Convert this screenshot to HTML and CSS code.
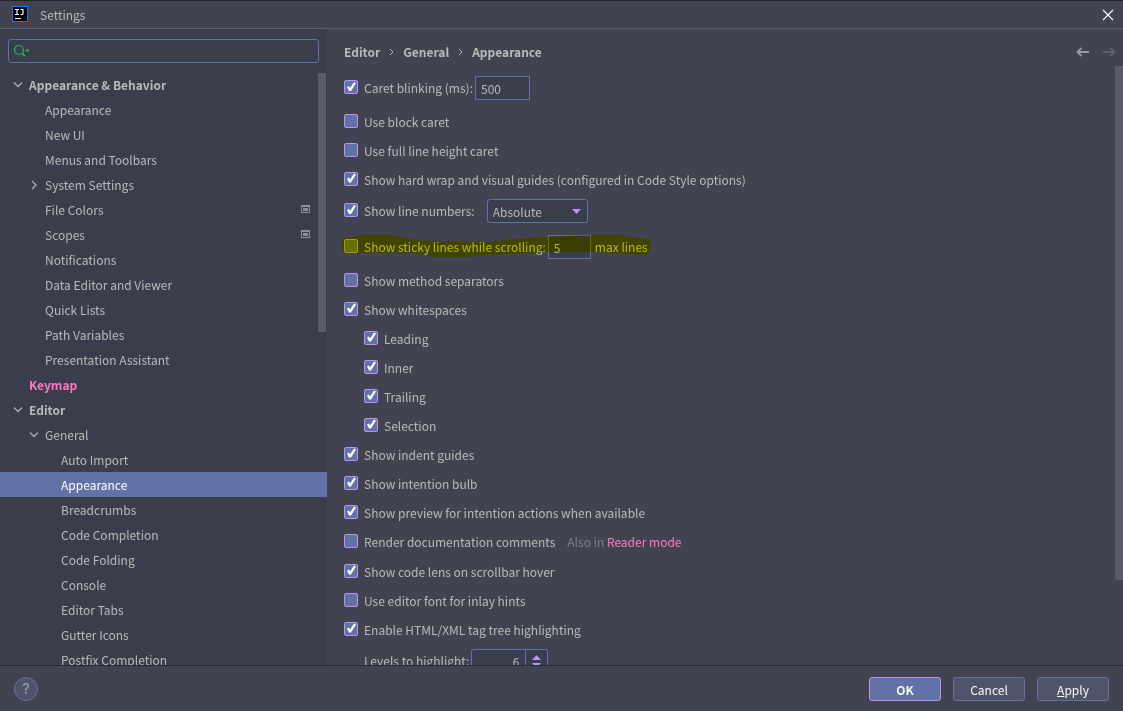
FILE: index.html
```html
<!DOCTYPE html>
<html lang="en">
<head>
<meta charset="utf-8">
<title>Settings</title>
<link rel="stylesheet" href="styles.css">
</head>
<body>
<header class="titlebar">
  <svg class="logo" width="16" height="16" viewBox="0 0 16 16" aria-hidden="true"><rect width="16" height="16" fill="#087cfa"/><rect x="1" y="1" width="14" height="14" fill="#000"/><path d="M3 3.500h4M5 3.500v5M3 8.500h4M8.500 3.500h3M11 3v4.500q0 1-1 1H8.500M3 12.500h6" fill="none" stroke="#fff" stroke-width="1.200"/></svg>
  <h1 class="title">Settings</h1>
  <button class="icon-button" aria-label="Close"><svg width="12" height="12" viewBox="0 0 12 12"><path d="M1 1l10 10M11 1L1 11" stroke="#fff" stroke-width="1.100"/></svg></button>
</header>
<div class="body">
  <aside class="sidebar">
    <div class="search">
      <svg width="18" height="14" viewBox="0 0 18 14" aria-hidden="true"><circle cx="5" cy="6" r="4.500" fill="none" stroke="#2fb164" stroke-width="1.200"/><path d="M8 9l3 3.200" stroke="#2fb164" stroke-width="1.800"/><path d="M11 5.500h5L13.500 8z" fill="#2fb164"/></svg>
      <input class="search-input" type="text" aria-label="Search settings">
    </div>
    <div class="tree-area">
      <nav class="tree" aria-label="Settings categories">
        <a class="node root" href="#"><svg class="arrow" viewBox="0 0 10 10"><path d="M1 2.500l4 4 4-4"/></svg>Appearance &amp; Behavior</a>
        <a class="node l1" href="#">Appearance</a>
        <a class="node l1" href="#">New UI</a>
        <a class="node l1" href="#">Menus and Toolbars</a>
        <a class="node l1 open" href="#"><svg class="arrow" viewBox="0 0 10 10"><path d="M3 1l4 4-4 4"/></svg>System Settings</a>
        <a class="node l1" href="#">File Colors<svg class="badge" width="9" height="8" viewBox="0 0 9 8"><path d="M0 0h9v8H0zM1 2v5h7V2z" fill="#8c8f99" fill-rule="evenodd"/><path d="M2 3h5v3H2z" fill="#8c8f99"/></svg></a>
        <a class="node l1" href="#">Scopes<svg class="badge" width="9" height="8" viewBox="0 0 9 8"><path d="M0 0h9v8H0zM1 2v5h7V2z" fill="#8c8f99" fill-rule="evenodd"/><path d="M2 3h5v3H2z" fill="#8c8f99"/></svg></a>
        <a class="node l1" href="#">Notifications</a>
        <a class="node l1" href="#">Data Editor and Viewer</a>
        <a class="node l1" href="#">Quick Lists</a>
        <a class="node l1" href="#">Path Variables</a>
        <a class="node l1" href="#">Presentation Assistant</a>
        <a class="node keymap" href="#">Keymap</a>
        <a class="node root" href="#"><svg class="arrow" viewBox="0 0 10 10"><path d="M1 2.500l4 4 4-4"/></svg>Editor</a>
        <a class="node l1 open" href="#"><svg class="arrow" viewBox="0 0 10 10"><path d="M1 2.500l4 4 4-4"/></svg>General</a>
        <a class="node l2" href="#">Auto Import</a>
        <a class="node l2 selected" href="#" aria-current="page">Appearance</a>
        <a class="node l2" href="#">Breadcrumbs</a>
        <a class="node l2" href="#">Code Completion</a>
        <a class="node l2" href="#">Code Folding</a>
        <a class="node l2" href="#">Console</a>
        <a class="node l2" href="#">Editor Tabs</a>
        <a class="node l2" href="#">Gutter Icons</a>
        <a class="node l2" href="#">Postfix Completion</a>
      </nav>
      <div class="thumb"></div>
    </div>
  </aside>
  <main class="main">
    <div class="crumbs">
      <h2 class="crumb-list"><span>Editor</span><svg width="5" height="8" viewBox="0 0 5 8"><path d="M1 1l3 3-3 3"/></svg><span>General</span><svg width="5" height="8" viewBox="0 0 5 8"><path d="M1 1l3 3-3 3"/></svg><span>Appearance</span></h2>
      <button class="icon-button" aria-label="Back"><svg width="13" height="10" viewBox="0 0 13 10"><path d="M5.500 1L1.500 5l4 4M1.500 5H13" fill="none" stroke="#9698a2" stroke-width="1.800"/></svg></button>
      <button class="icon-button" aria-label="Forward" disabled><svg width="13" height="10" viewBox="0 0 13 10"><path d="M7.500 1l4 4-4 4M11.500 5H0" fill="none" stroke="#5f6068" stroke-width="1.800"/></svg></button>
    </div>
    <div class="content">
      <form class="options">
        <div class="row caret-row"><label class="check"><input type="checkbox" checked>Caret blinking (ms):</label><input class="field" type="text" value="500" aria-label="Caret blinking period"></div>
        <div class="row"><label class="check"><input type="checkbox">Use block caret</label></div>
        <div class="row"><label class="check"><input type="checkbox">Use full line height caret</label></div>
        <div class="row"><label class="check"><input type="checkbox" checked>Show hard wrap and visual guides (configured in Code Style options)</label></div>
        <div class="row numbers-row"><label class="check"><input type="checkbox" checked>Show line numbers:</label><span class="select-box"><select class="select" aria-label="Line numbers"><option>Absolute</option><option>Relative</option><option>Hybrid</option></select><svg class="select-arrow" width="9" height="5" viewBox="0 0 9 5"><path d="M0 0h9L4.500 5z" fill="#bd93f9"/></svg></span></div>
        <div class="row sticky-row"><label class="check"><input type="checkbox">Show sticky lines while scrolling:</label><input class="field small" id="max-lines" type="text" value="5"><label class="after" for="max-lines">max lines</label>
          <svg class="marker" width="310" height="26" viewBox="0 0 310 26" aria-hidden="true"><path d="M1 5L12 3 22 1H46L60 3 75 6 95 7H155L170 5 205 3 235 1H278L290 3 307 5 309 6V19L305 21 290 20 245 18 205 18 175 20 142 21 128 23H92L85 20 60 19 1 19z" fill="#ff0"/></svg></div>
        <div class="row"><label class="check"><input type="checkbox">Show method separators</label></div>
        <div class="row"><label class="check"><input type="checkbox" checked>Show whitespaces</label></div>
        <div class="row nested"><label class="check"><input type="checkbox" checked>Leading</label></div>
        <div class="row nested"><label class="check"><input type="checkbox" checked>Inner</label></div>
        <div class="row nested"><label class="check"><input type="checkbox" checked>Trailing</label></div>
        <div class="row nested"><label class="check"><input type="checkbox" checked>Selection</label></div>
        <div class="row"><label class="check"><input type="checkbox" checked>Show indent guides</label></div>
        <div class="row"><label class="check"><input type="checkbox" checked>Show intention bulb</label></div>
        <div class="row"><label class="check"><input type="checkbox" checked>Show preview for intention actions when available</label></div>
        <div class="row docs-row"><label class="check"><input type="checkbox">Render documentation comments</label><span class="note">Also in <a class="link" href="#">Reader mode</a></span></div>
        <div class="row"><label class="check"><input type="checkbox" checked>Show code lens on scrollbar hover</label></div>
        <div class="row"><label class="check"><input type="checkbox">Use editor font for inlay hints</label></div>
        <div class="row"><label class="check"><input type="checkbox" checked>Enable HTML/XML tag tree highlighting</label></div>
        <div class="row levels-row"><label for="levels">Levels to highlight:</label><span class="spinner"><input class="spinner-input" id="levels" type="text" value="6"><span class="steps"><svg width="9" height="13" viewBox="0 0 9 13" aria-hidden="true"><path d="M0 5h9L4.500 0zM0 8h9l-4.500 5z" fill="#bd93f9"/></svg></span></span></div>
      </form>
      <div class="thumb main-thumb"></div>
    </div>
  </main>
</div>
<footer class="footer">
  <button class="help" aria-label="Help">?</button>
  <button class="button primary">OK</button>
  <button class="button">Cancel</button>
  <button class="button"><u>A</u>pply</button>
</footer>
</body>
</html>
```
FILE: styles.css
```css
* { box-sizing: border-box; }
body {
  margin: 0;
  height: 100vh;
  display: flex;
  flex-direction: column;
  overflow: hidden;
  background: #414450;
  color: #bbb;
  font: 12px/20px "Noto Sans CJK KR", "Noto Sans", sans-serif;
}
h1, h2 { margin: 0; font-size: inherit; }
a { color: inherit; text-decoration: none; }
button, input, select { font: inherit; color: inherit; }

.titlebar {
  flex: none;
  height: 29px;
  display: flex;
  align-items: center;
  padding: 0 9px 0 12px;
  border-top: 1px solid #23242e;
  border-bottom: 1px solid #5b5d67;
}
.logo { margin-bottom: 2px; }
.title { flex: 1; margin-left: 12px; font-weight: 400; }
.icon-button { display: flex; padding: 0; border: 0; background: none; }

.body { flex: 1; min-height: 0; display: flex; }
.sidebar {
  flex: 0 0 327px;
  display: flex;
  flex-direction: column;
  background: #3a3d4c;
  border-right: 1px solid #383b48;
}
.search {
  flex: none;
  height: 24px;
  margin: 10px 7px 9px 8px;
  padding-left: 5px;
  display: flex;
  align-items: center;
  border: 1px solid #6272a4;
  border-radius: 3px;
}
.search-input { flex: 1; min-width: 0; border: 0; background: none; outline: 0; }
.tree-area { flex: 1; min-height: 0; position: relative; overflow: hidden; margin-right: -1px; }
.tree { display: flex; flex-direction: column; }
.node {
  height: 25px;
  display: flex;
  align-items: center;
  padding: 1px 17px 0 0;
}
.root { padding-left: 13px; font-weight: 700; }
.keymap { padding-left: 29px; font-weight: 700; color: #ff79c6; }
.l1 { padding-left: 45px; }
.l1.open { padding-left: 29px; }
.l2 { padding-left: 61px; }
.selected { background: #6272a4; color: #fff; }
.arrow { width: 10px; height: 10px; margin-right: 6px; fill: none; stroke: #adafb5; stroke-width: 1.300; }
.badge { margin-left: auto; margin-bottom: 2px; }
.thumb {
  position: absolute;
  top: 1px;
  right: 1px;
  width: 8px;
  height: 259px;
  background: #595c67;
}

.main { flex: 1; min-width: 0; display: flex; flex-direction: column; }
.crumbs { flex: none; height: 37px; display: flex; align-items: center; gap: 14px; padding: 8px 7px 0 17px; }
.crumb-list { flex: 1; display: flex; align-items: center; gap: 9px; font-weight: 700; }
.crumb-list svg { fill: none; stroke: #adafb5; }
.content { flex: 1; min-height: 0; position: relative; overflow: hidden; }
.main-thumb { top: 0; right: 0; height: 514px; }
.options { padding: 2px 0 0 17px; }
.row { height: 29px; display: flex; align-items: center; position: relative; }
.caret-row { height: 39px; padding-top: 1px; }
.numbers-row { height: 34px; }
.sticky-row { height: 37px; margin-bottom: 1px; }
.docs-row { margin-bottom: 1px; }
.nested { padding-left: 20px; }
.levels-row { height: 34px; padding-left: 20px; }
.check { display: flex; align-items: center; gap: 6px; white-space: nowrap; }
.check input {
  appearance: none;
  flex: none;
  width: 14px;
  height: 14px;
  margin: 0 0 2px;
  border: 1px solid #bd93f9;
  border-radius: 2px;
  background: #6272a4;
}
.check input:checked::before {
  content: "";
  display: block;
  width: 12px;
  height: 12px;
  background: #fff;
  clip-path: polygon(2px 6px, 4px 5px, 5px 7px, 9px 1px, 11px 2px, 6px 10px, 4px 10px);
}
.field {
  width: 55px;
  height: 24px;
  margin-left: 2px;
  padding: 1px 5px 0;
  border: 1px solid #6272a4;
  background: #3a3d4c;
}
.small { width: 43px; }
.after { margin-left: 4px; }
.select-box { position: relative; margin-left: 12px; }
.select {
  appearance: none;
  display: block;
  width: 101px;
  height: 24px;
  padding: 1px 5px 0;
  border: 1px solid #6272a4;
  border-radius: 3px;
  background: #3a3d4c;
}
.select-arrow { position: absolute; right: 7px; top: 10px; pointer-events: none; }
.marker { position: absolute; left: -3px; top: 6px; mix-blend-mode: multiply; pointer-events: none; }
.note { margin-left: 12px; color: #7f8189; }
.link { color: #ff79c6; }
.spinner {
  display: flex;
  width: 77px;
  height: 24px;
  margin-left: 2px;
  border: 1px solid #6272a4;
  border-radius: 3px;
  background: #3a3d4c;
}
.spinner-input { flex: 1; min-width: 0; padding: 1px 6px 0; border: 0; background: none; text-align: right; }
.steps { width: 22px; display: flex; align-items: center; justify-content: center; border-left: 1px solid #6272a4; }

.footer {
  flex: none;
  height: 46px;
  display: flex;
  align-items: center;
  gap: 12px;
  padding: 1px 14px 0;
  border-top: 1px solid #282a36;
}
.help {
  width: 24px;
  height: 24px;
  margin-right: auto;
  padding: 0;
  border: 1px solid #6272a4;
  border-radius: 50%;
  background: #50546b;
  color: #8c8f99;
  font: 700 15px/20px Roboto, sans-serif;
}
.button {
  width: 72px;
  height: 24px;
  padding: 1px 0 0;
  border: 1px solid #6272a4;
  border-radius: 3px;
  background: #50546b;
  color: #f8f8f2;
}
.primary { border-color: #bd93f9; background: #6272a4; font-weight: 700; }
```
